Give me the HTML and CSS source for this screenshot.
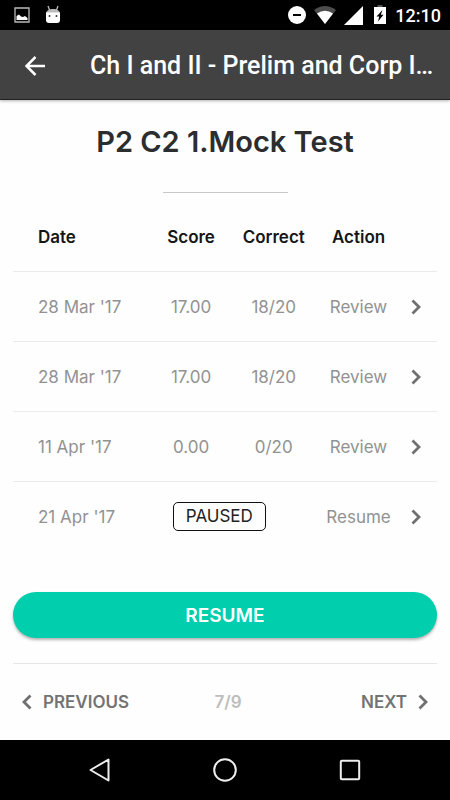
FILE: index.html
```html
<!DOCTYPE html>
<html lang="en">
<head>
<meta charset="utf-8">
<meta name="viewport" content="width=device-width, initial-scale=1">
<title>P2 C2 1.Mock Test</title>
<link rel="stylesheet" href="styles.css">
</head>
<body>
<div class="statusbar">
  <svg width="16" height="18" viewBox="0 0 16 18" aria-hidden="true"><path d="M1 2h14v14H1z" fill="none" stroke="#bbb" stroke-width="1.3"/><path d="M2.500 14V10L5 8.500l2 2 2 .5 2-1 2.500 2v2z" fill="#fff"/></svg>
  <svg width="16" height="20" viewBox="0 0 16 20" aria-hidden="true"><path d="M3 1l1.500 4M13 1l-1.500 4" stroke="#bbb" stroke-width="1.300"/><path d="M1 9C1 5.500 4 4 8 4s7 1.500 7 5z" fill="#bbb"/><path d="M1 7.500h14V15q0 3-3 3H4q-3 0-3-3z" fill="#fff"/><circle cx="4.500" cy="11" r="1" fill="#333"/><circle cx="11.500" cy="11" r="1" fill="#333"/></svg>
  <svg class="push" width="18" height="18" viewBox="0 0 18 18" aria-hidden="true"><circle cx="9" cy="9" r="9" fill="#fff"/><path d="M5 9h8" stroke="#000" stroke-width="2"/></svg>
  <svg width="22" height="18" viewBox="0 0 22 18" aria-hidden="true"><path d="M0 4Q11-4 22 4L11 18z" fill="#4d4d4d"/><path d="M3 7.500Q11 2 19 7.500L11 18z" fill="#fff"/></svg>
  <svg width="19" height="19" viewBox="0 0 19 19" aria-hidden="true"><path d="M0 19L19 0v19z" fill="#fff"/></svg>
  <svg class="battery" width="12" height="20" viewBox="0 0 12 20" aria-hidden="true"><path d="M3.500 0h5v3h-5z" fill="#555"/><path d="M0 2h12v17H0z" fill="#fff"/><path d="M8.500 5L2.500 11.500h2.700L4 16.500l5.500-6.800H6.800z" fill="#000"/></svg>
  <span class="clock">12:10</span>
</div>
<header class="appbar">
  <button class="back" type="button" aria-label="Back"><svg width="20" height="20" viewBox="0 0 20 20" aria-hidden="true"><path d="M20 10H2M10.500 1L1.500 10l9 9" fill="none" stroke="#fff" stroke-width="2.500"/></svg></button>
  <div class="appbar-title">Ch I and II - Prelim and Corp I…</div>
</header>
<main class="content">
  <h1>P2 C2 1.Mock Test</h1>
  <hr class="rule">
  <table class="attempts">
    <colgroup><col class="c-date"><col class="c-score"><col class="c-correct"><col class="c-action"><col class="c-arrow"></colgroup>
    <thead>
      <tr><th scope="col">Date</th><th scope="col">Score</th><th scope="col">Correct</th><th scope="col">Action</th><td></td></tr>
    </thead>
    <tbody>
      <tr><td>28 Mar '17</td><td>17.00</td><td>18/20</td><td><a href="#">Review</a></td><td><svg class="chevron" viewBox="0 0 10 16" aria-hidden="true"><path d="M1.500 1.500L8 8l-6.500 6.500"/></svg></td></tr>
      <tr><td>28 Mar '17</td><td>17.00</td><td>18/20</td><td><a href="#">Review</a></td><td><svg class="chevron" viewBox="0 0 10 16" aria-hidden="true"><path d="M1.500 1.500L8 8l-6.500 6.500"/></svg></td></tr>
      <tr><td>11 Apr '17</td><td>0.00</td><td>0/20</td><td><a href="#">Review</a></td><td><svg class="chevron" viewBox="0 0 10 16" aria-hidden="true"><path d="M1.500 1.500L8 8l-6.500 6.500"/></svg></td></tr>
      <tr><td>21 Apr '17</td><td class="state" colspan="2"><span class="paused">PAUSED</span></td><td><a href="#">Resume</a></td><td><svg class="chevron" viewBox="0 0 10 16" aria-hidden="true"><path d="M1.500 1.500L8 8l-6.500 6.500"/></svg></td></tr>
    </tbody>
  </table>
  <button class="resume" type="button">RESUME</button>
  <nav class="pager">
    <a href="#"><svg class="chevron" viewBox="0 0 10 16" aria-hidden="true"><path d="M8.500 1.500L2 8l6.500 6.500"/></svg>PREVIOUS</a>
    <span class="page">7/9</span>
    <a class="next" href="#">NEXT<svg class="chevron" viewBox="0 0 10 16" aria-hidden="true"><path d="M1.500 1.500L8 8l-6.500 6.500"/></svg></a>
  </nav>
</main>
<footer class="navbar">
  <button type="button" aria-label="Back"><svg width="24" height="26" viewBox="0 0 24 26" aria-hidden="true"><path d="M20.500 2.500v21L2.500 13z"/></svg></button>
  <button type="button" aria-label="Home"><svg width="24" height="26" viewBox="0 0 24 26" aria-hidden="true"><circle cx="12" cy="13" r="10.800"/></svg></button>
  <button type="button" aria-label="Recent apps"><svg width="24" height="26" viewBox="0 0 24 26" aria-hidden="true"><rect x="2.800" y="3.800" width="18.400" height="18.400" rx="1"/></svg></button>
</footer>
</body>
</html>
```
FILE: styles.css
```css
* { box-sizing: border-box; }
body {
  margin: 0;
  min-height: 100vh;
  display: flex;
  flex-direction: column;
  background: #fefefe;
  font-family: Inter, Roboto, sans-serif;
  font-size: 17px;
  color: #929292;
}
a { color: inherit; text-decoration: none; }
button { border: 0; padding: 0; background: none; font: inherit; }
svg { display: block; flex: none; }

.statusbar {
  height: 30px;
  padding: 0 9px 0 14px;
  display: flex;
  align-items: center;
  gap: 8px;
  background: #000;
  color: #fff;
  font-family: Roboto, sans-serif;
}
.statusbar svg:first-child { margin-right: 7px; }
.push { margin-left: auto; }
.battery { margin: 0 1px 0 3px; }
.clock { font-size: 18px; font-weight: 500; }

.appbar {
  height: 70px;
  padding: 2px 16px 0 25px;
  display: flex;
  align-items: center;
  gap: 45px;
  background: #424242;
  border-bottom: 1px solid #222;
  box-shadow: 0 1px 3px rgba(0, 0, 0, .3);
}
.appbar-title {
  flex: 1;
  white-space: nowrap;
  color: #fff;
  font: 500 25px/30px Roboto, sans-serif;
}

.content { flex: 1; padding: 0 13px; }
h1 {
  margin: 24px 0 0;
  text-align: center;
  font-size: 29px;
  line-height: 36px;
  font-weight: 600;
  color: #2b2d2e;
}
.rule {
  width: 125px;
  margin: 32px auto 8px;
  border: 0;
  border-top: 1px solid #c8c8c8;
}
.attempts {
  width: 100%;
  table-layout: fixed;
  border-collapse: collapse;
}
.c-date { width: 32%; }
.c-score { width: 20%; }
.c-correct { width: 19%; }
.c-action { width: 21%; }
.c-arrow { width: 8%; }
.attempts tr { height: 70px; }
.attempts th, .attempts td { padding: 2px 0 0; text-align: center; white-space: nowrap; }
.attempts th { font-weight: 600; color: #151617; }
.attempts tbody tr { border-top: 1px solid #ebebeb; }
.attempts tr > :first-child { padding-left: 25px; text-align: left; }
.attempts .state { padding: 0 24px 0 0; }
.paused {
  display: inline-block;
  padding: 0 12px;
  border: 1px solid #111;
  border-radius: 5px;
  line-height: 27px;
  color: #222;
}
.chevron {
  width: 10px;
  height: 16px;
  fill: none;
  stroke: #707070;
  stroke-width: 2.800;
}
.attempts .chevron { margin-left: 8px; }

.resume {
  display: block;
  width: 100%;
  height: 46px;
  margin: 41px 0 25px;
  border-radius: 23px;
  background: #00ceac;
  box-shadow: 0 2px 3px rgba(0, 0, 0, .3);
  color: #fff;
  font-size: 19px;
  font-weight: 600;
}
.pager {
  height: 76px;
  padding: 0 9px;
  display: grid;
  grid-template-columns: 1fr auto 1fr;
  align-items: center;
  border-top: 1px solid #e6e6e6;
  font-weight: 600;
  color: #737373;
}
.pager a { display: flex; align-items: center; gap: 11px; }
.pager .next { justify-content: flex-end; }
.page { padding-left: 6px; color: #bdbdbd; }

.navbar {
  height: 60px;
  padding: 0 37px;
  display: grid;
  grid-template-columns: repeat(3, 1fr);
  place-items: center;
  background: #000;
}
.navbar svg { fill: none; stroke: #eee; stroke-width: 2; stroke-linejoin: round; }
```
